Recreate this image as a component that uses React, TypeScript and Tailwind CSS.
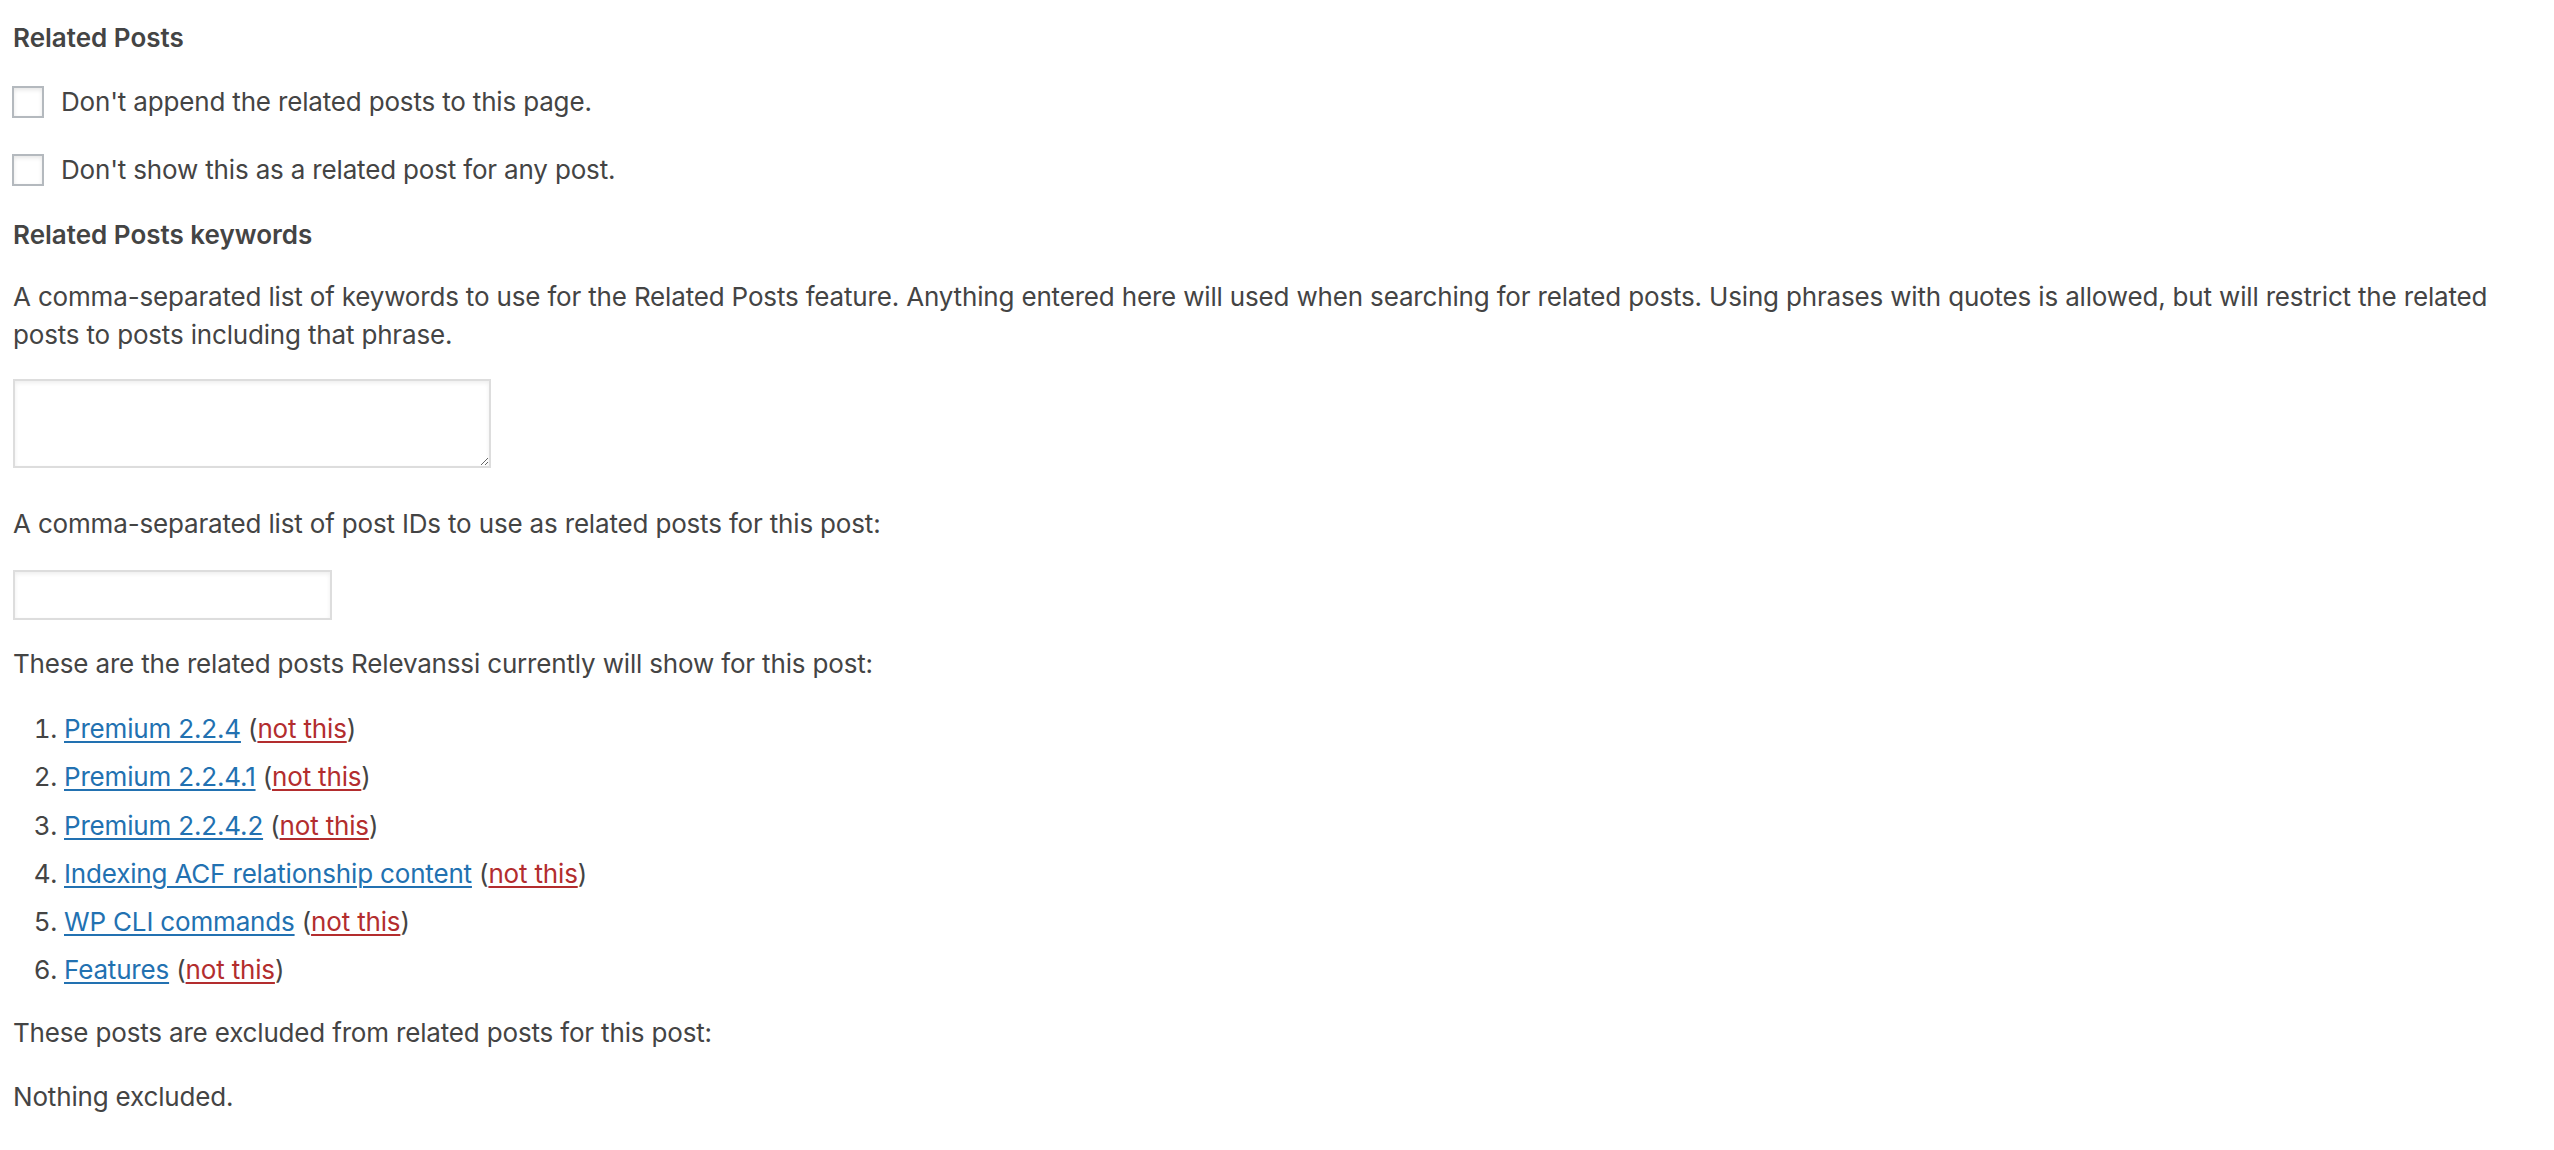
import React from "react";

const items = [
  "Premium 2.2.4",
  "Premium 2.2.4.1",
  "Premium 2.2.4.2",
  "Indexing ACF relationship content",
  "WP CLI commands",
  "Features",
];

function Check({ label, className }: { label: string; className?: string }) {
  return (
    <label className={"flex items-center h-[38px] " + (className ?? "")}>
      <span className="block w-[32px] h-[32px] border-2 border-[#b4b9be] bg-white shadow-[inset_0_2px_4px_rgba(0,0,0,0.1)] ml-[-1px] mr-[17px] shrink-0" />
      <span>{label}</span>
    </label>
  );
}

export default function App() {
  return (
    <div
      className="min-h-[1150px] w-full bg-white text-[#444] text-[26px] leading-[38px] tracking-[-0.17px] px-[13px] pt-[19px]"
      style={{ fontFamily: 'Inter, "Noto Sans", sans-serif' }}
    >
      <h2 className="font-semibold h-[38px] tracking-normal">Related Posts</h2>
      <Check className="mt-[26px]" label="Don't append the related posts to this page." />
      <Check className="mt-[30px]" label="Don't show this as a related post for any post." />
      <h2 className="font-semibold h-[38px] mt-[27px] tracking-normal">Related Posts keywords</h2>
      <p className="mt-[24px]">
        A comma-separated list of keywords to use for the Related Posts feature. Anything entered here will used when
        searching for related posts. Using phrases with quotes is allowed, but will restrict the related posts to posts
        including that phrase.
      </p>
      <textarea
        className="block mt-[25px] w-[478px] h-[89px] border-2 border-[#ddd] bg-white shadow-[inset_0_2px_4px_rgba(0,0,0,0.07)] outline-none"
        defaultValue=""
      />
      <p className="mt-[37px]">A comma-separated list of post IDs to use as related posts for this post:</p>
      <input
        type="text"
        className="block mt-[27px] w-[319px] h-[50px] border-2 border-[#ddd] bg-white shadow-[inset_0_2px_4px_rgba(0,0,0,0.07)] outline-none"
        defaultValue=""
      />
      <p className="mt-[25px]">These are the related posts Relevanssi currently will show for this post:</p>
      <ol className="list-decimal list-outside ml-[51px] mt-[27px] space-y-[10.3px]">
        {items.map((t) => (
          <li key={t}>
            <a href="#" className="text-[#2271b1] underline decoration-2 underline-offset-[3px]">
              {t}
            </a>{" "}
            (
            <a href="#" className="text-[#b32d2e] underline decoration-2 underline-offset-[3px]">
              not this
            </a>
            )
          </li>
        ))}
      </ol>
      <p className="mt-[25px]">These posts are excluded from related posts for this post:</p>
      <p className="mt-[26px]">Nothing excluded.</p>
    </div>
  );
}
